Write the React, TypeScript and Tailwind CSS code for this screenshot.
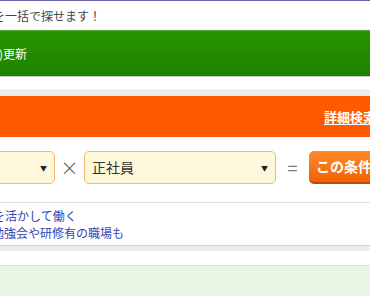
import React from "react";

const font = "font-['Noto_Sans_CJK_JP','Noto_Sans',sans-serif]";

function TopNote() {
  return (
    <div className="flex h-[29px] items-center overflow-hidden whitespace-nowrap">
      <span className="ml-[-7px] text-[12px] text-[#444]">を一括で探せます！</span>
    </div>
  );
}

function UpdateBar() {
  return (
    <div className="flex h-[47px] items-center border-t border-[#4fa62d] border-b border-b-[#c9c9c9] bg-gradient-to-b from-[#279400] to-[#1f8200]">
      <span className="ml-[-1px] text-[12px] text-white">)更新</span>
    </div>
  );
}

function SearchHeader() {
  return (
    <div className="flex h-[41px] items-center overflow-hidden whitespace-nowrap bg-[#ff5a00]">
      <a className="ml-[324px] shrink-0 text-[13px] font-bold text-white underline underline-offset-2">
        詳細検索 »
      </a>
    </div>
  );
}

function SelectBox({ width, label }: { width: string; label?: string }) {
  return (
    <div
      className={`${width} relative flex h-[33px] shrink-0 items-center rounded-[5px] border border-[#f5b86e] bg-[#fdf7dc] pl-[7px]`}
    >
      <span className="text-[14px] text-[#333]">{label}</span>
      <span className="absolute right-[7px] top-[13px] text-[7px] leading-none text-[#222]">▼</span>
    </div>
  );
}

function ConditionRow() {
  return (
    <div className="flex h-[33px] items-center overflow-hidden whitespace-nowrap">
      <SelectBox width="w-[60px] ml-[-5px]" />
      <span className="w-[29px] shrink-0 text-center text-[18px] font-light text-[#444]">×</span>
      <SelectBox width="w-[192px]" label="正社員" />
      <span className="w-[33px] shrink-0 text-center text-[18px] text-[#777]">=</span>
      <button className="flex h-[33px] shrink-0 items-center rounded-[5px] border-b-2 border-[#c14a00] bg-gradient-to-b from-[#ff8a2a] to-[#f26000] pl-[7px] pr-3 text-[14px] font-bold text-white">
        この条件で探す
      </button>
    </div>
  );
}

function LinkBox() {
  return (
    <div className="border-t border-[#dcdcdc] bg-white pt-[4px] pb-[4px]">
      <div className="overflow-hidden whitespace-nowrap text-[12px] leading-[17px] text-[#3045b0]">
        <p className="ml-[-7px]">を活かして働く</p>
        <p className="ml-[-8px]">勉強会や研修有の職場も</p>
      </div>
    </div>
  );
}

export default function App() {
  return (
    <div className={`${font} h-[296px] w-[370px] overflow-hidden bg-white`}>
      <div className="h-px bg-[#6b64a8]" />
      <TopNote />
      <UpdateBar />
      <div className="h-[13px] bg-white" />
      <div className="h-[6px] border-t border-[#e2e2e2] bg-[#ededed]" />
      <SearchHeader />
      <div className="bg-white pt-[14px]">
        <ConditionRow />
        <div className="h-[18px]" />
        <LinkBox />
        <div className="h-[6px] border-t border-[#d4d4d4] bg-[#ececec]" />
        <div className="h-[14px] bg-white" />
        <div className="h-[40px] border-t border-[#d6dfd0] bg-[#ebf5e3]" />
      </div>
    </div>
  );
}
